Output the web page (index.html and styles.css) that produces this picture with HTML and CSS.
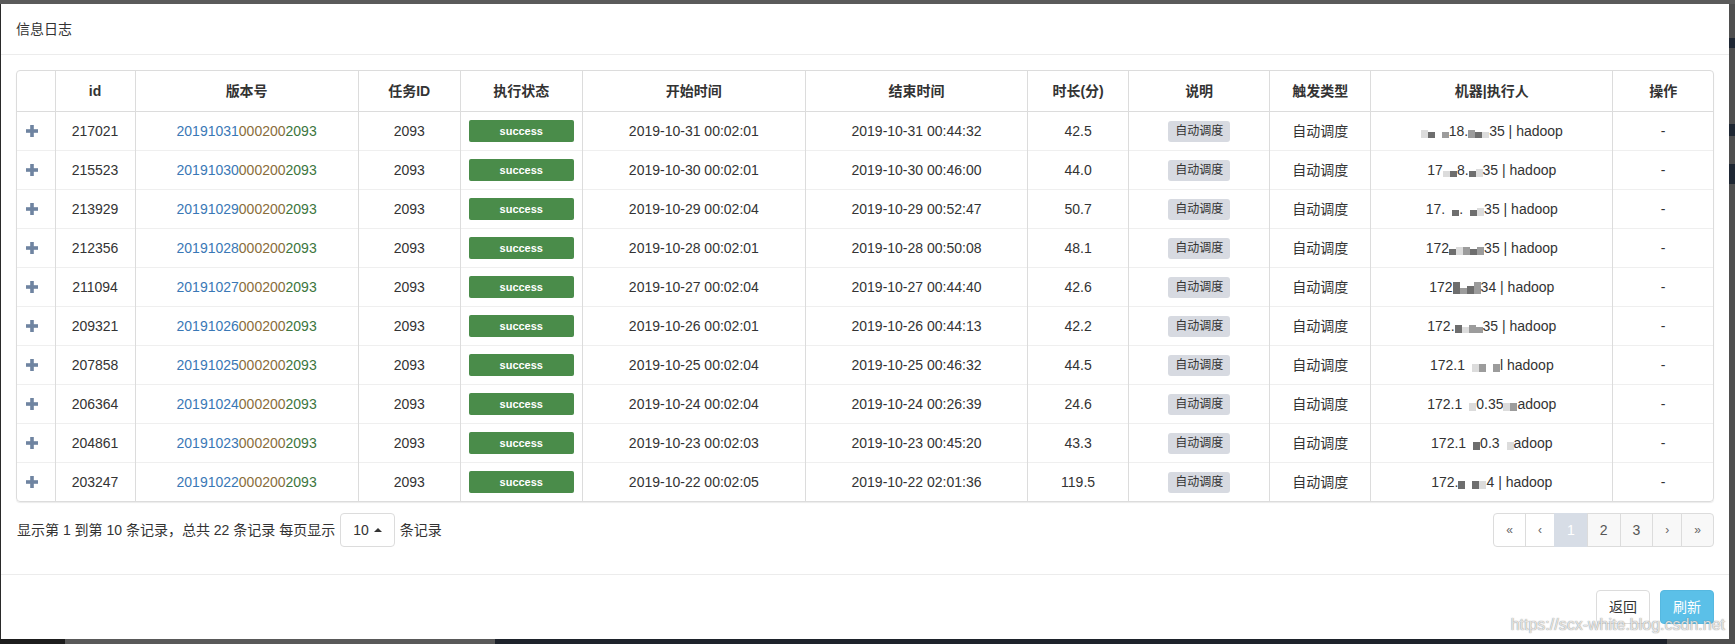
FILE: index.html
```html
<!DOCTYPE html>
<html lang="zh-CN">
<head>
<meta charset="utf-8">
<title>信息日志</title>
<link rel="stylesheet" href="styles.css">
</head>
<body>
<div class="top-strip"></div>
<div class="stage">
  <div class="edge-left"></div>
  <div class="modal">
    <div class="modal-header">信息日志</div>
    <div class="modal-body">
      <div class="table-wrap">
        <table class="log-table">
          <colgroup>
            <col class="c-detail"><col class="c-id"><col class="c-ver"><col class="c-task"><col class="c-status"><col class="c-start"><col class="c-end"><col class="c-dur"><col class="c-desc"><col class="c-trig"><col class="c-host"><col class="c-op">
          </colgroup>
          <thead>
            <tr><th></th><th>id</th><th>版本号</th><th>任务ID</th><th>执行状态</th><th>开始时间</th><th>结束时间</th><th>时长(分)</th><th>说明</th><th>触发类型</th><th>机器|执行人</th><th>操作</th></tr>
          </thead>
          <tbody>
            <tr>
              <td class="detail"><svg class="plus" viewBox="0 0 12 12"><rect x="0" y="4.2" width="12" height="3.6"/><rect x="4.2" y="0" width="3.6" height="12"/></svg></td>
              <td>217021</td>
              <td><span class="v-date">20191031</span><span class="v-mid">000200</span><span class="v-task">2093</span></td>
              <td>2093</td>
              <td><span class="lbl-success">success</span></td>
              <td>2019-10-31 00:02:01</td>
              <td>2019-10-31 00:44:32</td>
              <td>42.5</td>
              <td><span class="badge">自动调度</span></td>
              <td>自动调度</td>
              <td class="host"><span class="mz"><i class="g3"></i><i class="g1 lo"></i><i class="g0"></i><i class="g2 lo"></i></span>18.<span class="mz"><i class="g2"></i><i class="g1 lo"></i><i class="g3 lo"></i></span>35 | hadoop</td>
              <td>-</td>
            </tr>
            <tr>
              <td class="detail"><svg class="plus" viewBox="0 0 12 12"><rect x="0" y="4.2" width="12" height="3.6"/><rect x="4.2" y="0" width="3.6" height="12"/></svg></td>
              <td>215523</td>
              <td><span class="v-date">20191030</span><span class="v-mid">000200</span><span class="v-task">2093</span></td>
              <td>2093</td>
              <td><span class="lbl-success">success</span></td>
              <td>2019-10-30 00:02:01</td>
              <td>2019-10-30 00:46:00</td>
              <td>44.0</td>
              <td><span class="badge">自动调度</span></td>
              <td>自动调度</td>
              <td class="host">17<span class="mz"><i class="g3 lo"></i><i class="g1 lo"></i></span>8.<span class="mz"><i class="g1 lo"></i><i class="g3"></i></span>35 | hadoop</td>
              <td>-</td>
            </tr>
            <tr>
              <td class="detail"><svg class="plus" viewBox="0 0 12 12"><rect x="0" y="4.2" width="12" height="3.6"/><rect x="4.2" y="0" width="3.6" height="12"/></svg></td>
              <td>213929</td>
              <td><span class="v-date">20191029</span><span class="v-mid">000200</span><span class="v-task">2093</span></td>
              <td>2093</td>
              <td><span class="lbl-success">success</span></td>
              <td>2019-10-29 00:02:04</td>
              <td>2019-10-29 00:52:47</td>
              <td>50.7</td>
              <td><span class="badge">自动调度</span></td>
              <td>自动调度</td>
              <td class="host">17.<span class="mz"><i class="g0"></i><i class="g1 lo"></i></span>.<span class="mz"><i class="g0"></i><i class="g1 lo"></i><i class="g3"></i></span>35 | hadoop</td>
              <td>-</td>
            </tr>
            <tr>
              <td class="detail"><svg class="plus" viewBox="0 0 12 12"><rect x="0" y="4.2" width="12" height="3.6"/><rect x="4.2" y="0" width="3.6" height="12"/></svg></td>
              <td>212356</td>
              <td><span class="v-date">20191028</span><span class="v-mid">000200</span><span class="v-task">2093</span></td>
              <td>2093</td>
              <td><span class="lbl-success">success</span></td>
              <td>2019-10-28 00:02:01</td>
              <td>2019-10-28 00:50:08</td>
              <td>48.1</td>
              <td><span class="badge">自动调度</span></td>
              <td>自动调度</td>
              <td class="host">172<span class="mz"><i class="g1 lo"></i><i class="g3"></i><i class="g2"></i><i class="g1 lo"></i><i class="g2"></i></span>35 | hadoop</td>
              <td>-</td>
            </tr>
            <tr>
              <td class="detail"><svg class="plus" viewBox="0 0 12 12"><rect x="0" y="4.2" width="12" height="3.6"/><rect x="4.2" y="0" width="3.6" height="12"/></svg></td>
              <td>211094</td>
              <td><span class="v-date">20191027</span><span class="v-mid">000200</span><span class="v-task">2093</span></td>
              <td>2093</td>
              <td><span class="lbl-success">success</span></td>
              <td>2019-10-27 00:02:04</td>
              <td>2019-10-27 00:44:40</td>
              <td>42.6</td>
              <td><span class="badge">自动调度</span></td>
              <td>自动调度</td>
              <td class="host">172<span class="mz"><i class="g1 tall"></i><i class="g2 lo"></i><i class="g1"></i><i class="g2 tall"></i></span>34 | hadoop</td>
              <td>-</td>
            </tr>
            <tr>
              <td class="detail"><svg class="plus" viewBox="0 0 12 12"><rect x="0" y="4.2" width="12" height="3.6"/><rect x="4.2" y="0" width="3.6" height="12"/></svg></td>
              <td>209321</td>
              <td><span class="v-date">20191026</span><span class="v-mid">000200</span><span class="v-task">2093</span></td>
              <td>2093</td>
              <td><span class="lbl-success">success</span></td>
              <td>2019-10-26 00:02:01</td>
              <td>2019-10-26 00:44:13</td>
              <td>42.2</td>
              <td><span class="badge">自动调度</span></td>
              <td>自动调度</td>
              <td class="host">172.<span class="mz"><i class="g1"></i><i class="g3 lo"></i><i class="g2"></i><i class="g2 lo"></i></span>35 | hadoop</td>
              <td>-</td>
            </tr>
            <tr>
              <td class="detail"><svg class="plus" viewBox="0 0 12 12"><rect x="0" y="4.2" width="12" height="3.6"/><rect x="4.2" y="0" width="3.6" height="12"/></svg></td>
              <td>207858</td>
              <td><span class="v-date">20191025</span><span class="v-mid">000200</span><span class="v-task">2093</span></td>
              <td>2093</td>
              <td><span class="lbl-success">success</span></td>
              <td>2019-10-25 00:02:04</td>
              <td>2019-10-25 00:46:32</td>
              <td>44.5</td>
              <td><span class="badge">自动调度</span></td>
              <td>自动调度</td>
              <td class="host">172.1<span class="mz"><i class="g0"></i><i class="g3"></i><i class="g2"></i><i class="g0"></i><i class="g2"></i></span>l hadoop</td>
              <td>-</td>
            </tr>
            <tr>
              <td class="detail"><svg class="plus" viewBox="0 0 12 12"><rect x="0" y="4.2" width="12" height="3.6"/><rect x="4.2" y="0" width="3.6" height="12"/></svg></td>
              <td>206364</td>
              <td><span class="v-date">20191024</span><span class="v-mid">000200</span><span class="v-task">2093</span></td>
              <td>2093</td>
              <td><span class="lbl-success">success</span></td>
              <td>2019-10-24 00:02:04</td>
              <td>2019-10-24 00:26:39</td>
              <td>24.6</td>
              <td><span class="badge">自动调度</span></td>
              <td>自动调度</td>
              <td class="host">172.1<span class="mz"><i class="g0"></i><i class="g3"></i></span>0.35<span class="mz"><i class="g3"></i><i class="g2"></i></span>adoop</td>
              <td>-</td>
            </tr>
            <tr>
              <td class="detail"><svg class="plus" viewBox="0 0 12 12"><rect x="0" y="4.2" width="12" height="3.6"/><rect x="4.2" y="0" width="3.6" height="12"/></svg></td>
              <td>204861</td>
              <td><span class="v-date">20191023</span><span class="v-mid">000200</span><span class="v-task">2093</span></td>
              <td>2093</td>
              <td><span class="lbl-success">success</span></td>
              <td>2019-10-23 00:02:03</td>
              <td>2019-10-23 00:45:20</td>
              <td>43.3</td>
              <td><span class="badge">自动调度</span></td>
              <td>自动调度</td>
              <td class="host">172.1<span class="mz"><i class="g0"></i><i class="g1"></i></span>0.3<span class="mz"><i class="g0"></i><i class="g3"></i></span>adoop</td>
              <td>-</td>
            </tr>
            <tr>
              <td class="detail"><svg class="plus" viewBox="0 0 12 12"><rect x="0" y="4.2" width="12" height="3.6"/><rect x="4.2" y="0" width="3.6" height="12"/></svg></td>
              <td>203247</td>
              <td><span class="v-date">20191022</span><span class="v-mid">000200</span><span class="v-task">2093</span></td>
              <td>2093</td>
              <td><span class="lbl-success">success</span></td>
              <td>2019-10-22 00:02:05</td>
              <td>2019-10-22 02:01:36</td>
              <td>119.5</td>
              <td><span class="badge">自动调度</span></td>
              <td>自动调度</td>
              <td class="host">172.<span class="mz"><i class="g1"></i><i class="g0"></i><i class="g1"></i><i class="g3"></i></span>4 | hadoop</td>
              <td>-</td>
            </tr>
          </tbody>
        </table>
      </div>
      <div class="pager-row">
        <div class="page-info">
          <span>显示第 1 到第 10 条记录，总共 22 条记录 每页显示</span>
          <span class="page-size">10 <span class="caret-up"></span></span>
          <span>条记录</span>
        </div>
        <ul class="pagination">
          <li class="pg pg-off arrow">«</li>
          <li class="pg pg-off arrow">‹</li>
          <li class="pg active">1</li>
          <li class="pg">2</li>
          <li class="pg">3</li>
          <li class="pg arrow">›</li>
          <li class="pg arrow">»</li>
        </ul>
      </div>
    </div>
    <div class="modal-footer">
      <button class="btn btn-default">返回</button>
      <button class="btn btn-info">刷新</button>
    </div>
  </div>
  <div class="edge-right"></div>
</div>
<div class="bottom-strip">
  <div class="bs-a"></div><div class="bs-b"></div><div class="bs-c"></div><div class="bs-d"></div>
</div>
<div class="watermark">https://scx-white.blog.csdn.net</div>
</body>
</html>
```
FILE: styles.css
```css
* { box-sizing: border-box; }

html, body {
  margin: 0;
  padding: 0;
}

body {
  width: 1735px;
  height: 644px;
  overflow: hidden;
  position: relative;
  background: #525252;
  font-family: "Liberation Sans", "Noto Sans CJK SC", sans-serif;
  font-size: 14px;
  line-height: 20px;
  color: #333;
}

.top-strip {
  height: 4px;
  background: #5b5b5b;
}

.stage {
  display: flex;
  height: 635px;
}

.edge-left {
  width: 1px;
  background: #2a2a2a;
}

.edge-right {
  width: 6px;
  background: linear-gradient(#4f4f4f 0, #4f4f4f 34px, #1f2733 34px, #1f2733 44px, #4f4f4f 44px, #4f4f4f 120px, #1f2733 120px, #1f2733 132px, #4f4f4f 132px, #4f4f4f 160px, #1f2733 160px, #1f2733 180px, #4f4f4f 180px);
}

.modal {
  flex: 1;
  background: #fff;
  display: flex;
  flex-direction: column;
}

.modal-header {
  padding: 15px;
  border-bottom: 1px solid #ececec;
  font-size: 14px;
  line-height: 20px;
  color: #333;
}

.modal-body {
  flex: 1;
  padding: 15px 15px 0;
}

.table-wrap {
  border: 1px solid #dcdcdc;
  border-radius: 4px;
  overflow: hidden;
  box-shadow: 0 1px 1px rgba(0, 0, 0, 0.08);
}

.log-table {
  width: 100%;
  border-collapse: collapse;
  table-layout: fixed;
}

.c-detail { width: 38px; }
.c-id { width: 80px; }
.c-ver { width: 223px; }
.c-task { width: 102px; }
.c-status { width: 122px; }
.c-start { width: 223px; }
.c-end { width: 222px; }
.c-dur { width: 101px; }
.c-desc { width: 141px; }
.c-trig { width: 101px; }
.c-host { width: 242px; }
.c-op { width: 100px; }

.log-table th {
  height: 40px;
  padding: 0 8px;
  font-weight: bold;
  text-align: center;
  vertical-align: middle;
  border-bottom: 1px solid #dcdcdc;
  border-left: 1px solid #dcdcdc;
  color: #333;
}

.log-table td {
  padding: 8px;
  text-align: center;
  vertical-align: middle;
  border-top: 1px solid #efefef;
  border-left: 1px solid #dcdcdc;
  white-space: nowrap;
  color: #333;
}

.log-table th:first-child,
.log-table td:first-child {
  border-left: none;
}

.log-table td.detail {
  text-align: left;
  padding-left: 9px;
}

.plus {
  display: block;
  width: 12px;
  height: 12px;
  fill: #6f84a1;
}

.v-date { color: #3a78b6; }
.v-mid { color: #8a6d3b; }
.v-task { color: #3c763d; }

.lbl-success {
  display: block;
  height: 22px;
  line-height: 22px;
  background: #4a8c4a;
  color: #fff;
  font-size: 11px;
  font-weight: bold;
  border-radius: 2px;
  text-align: center;
}

.badge {
  display: inline-block;
  height: 21px;
  line-height: 21px;
  padding: 0 7px;
  background: #d7dae1;
  border-radius: 3px;
  font-size: 12px;
  color: #333;
}

.host .mz {
  display: inline-flex;
  align-items: flex-end;
  height: 14px;
  vertical-align: -2px;
}

.mz i {
  display: block;
  width: 7px;
  height: 8px;
}

.mz i.lo { height: 6px; }
.mz i.tall { height: 12px; }
.mz .g0 { background: transparent; }
.mz .g1 { background: #6e6e6e; }
.mz .g2 { background: #9c9c9c; }
.mz .g3 { background: #dcdcdc; }

.pager-row {
  display: flex;
  justify-content: space-between;
  align-items: center;
  margin-top: 11px;
}

.page-info {
  display: flex;
  align-items: center;
  gap: 5px;
  padding-left: 1px;
  color: #333;
}

.page-size {
  display: inline-flex;
  align-items: center;
  gap: 5px;
  height: 34px;
  padding: 0 12px;
  border: 1px solid #dcdcdc;
  border-radius: 4px;
  background: #fff;
}

.caret-up {
  width: 0;
  height: 0;
  border-left: 4px solid transparent;
  border-right: 4px solid transparent;
  border-bottom: 4px solid #333;
}

.pagination {
  display: flex;
  list-style: none;
  margin: 0;
  padding: 0;
}

.pg {
  height: 34px;
  line-height: 32px;
  padding: 0 12px;
  border: 1px solid #dcdcdc;
  margin-left: -1px;
  background: #f8f8f8;
  color: #555;
  font-size: 14px;
}

.pg.arrow {
  font-size: 12px;
  color: #666;
}

.pg-off {
  background: #fff;
  color: #888;
}

.pg.active {
  background: #d7dde6;
  color: #fff;
  border-color: #d7dde6;
}

.pg:first-child {
  margin-left: 0;
  border-radius: 4px 0 0 4px;
}

.pg:last-child {
  border-radius: 0 4px 4px 0;
}

.modal-footer {
  border-top: 1px solid #ececec;
  padding: 15px;
  display: flex;
  justify-content: flex-end;
  gap: 10px;
}

.btn {
  height: 34px;
  padding: 0 12px;
  border-radius: 4px;
  font-family: inherit;
  font-size: 14px;
  line-height: 32px;
  cursor: pointer;
}

.btn-default {
  background: #fff;
  border: 1px solid #dcdcdc;
  color: #333;
}

.btn-info {
  background: #5bc0e8;
  border: 1px solid #55b8e0;
  color: #fff;
}

.bottom-strip {
  display: flex;
  height: 5px;
}

.bs-a { width: 65px; background: #1d1d1d; }
.bs-b { width: 430px; background: #595959; }
.bs-c { width: 1172px; background: #1e232b; }
.bs-d { flex: 1; background: #4f4f4f; }

.watermark {
  position: absolute;
  right: 10px;
  bottom: 10px;
  font-size: 16px;
  line-height: 18px;
  color: rgba(255, 255, 255, 0.75);
  text-shadow: 0 0 1px rgba(110, 110, 110, 0.7), 0 0 1px rgba(110, 110, 110, 0.5);
  pointer-events: none;
}
```
